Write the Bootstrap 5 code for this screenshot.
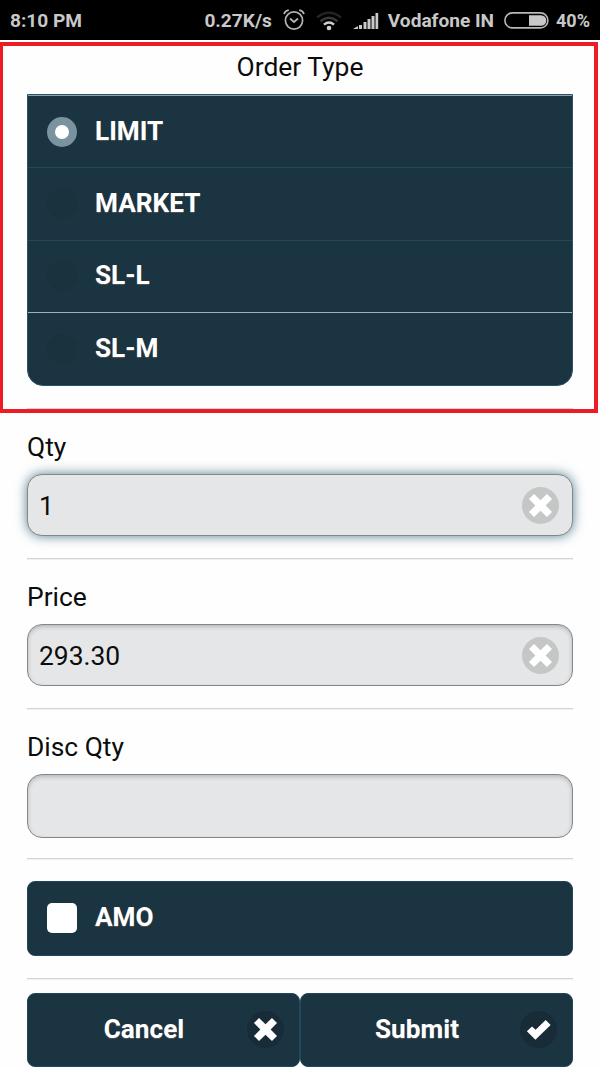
<!DOCTYPE html>
<html lang="en">
<head>
<meta charset="utf-8">
<meta name="viewport" content="width=device-width, initial-scale=1">
<title>Order</title>
<link href="https://cdn.jsdelivr.net/npm/bootstrap@5.3.0/dist/css/bootstrap.min.css" rel="stylesheet">
<style>
body{font-family:Roboto,"Liberation Sans",sans-serif;font-size:26.4px;line-height:30px;color:#0c0c0c;background:#fefefe;overflow:hidden}
.statusbar{height:40px;background:#000;color:#c8c8c8;font-size:19.1px;font-weight:700;line-height:22px;padding:2px 10px 0;white-space:nowrap}
.section{border-bottom:1px solid #d4d4d4;box-shadow:0 1px 0 #f0f0f0}
.types{height:369px}
.field{height:150px}
.highlight{left:0;top:42px;width:598px;height:371px;border:4px solid #ed1c24;border-left-width:3px;z-index:3;pointer-events:none}
.dark-box{background:#1a3441;color:#fff;border:1px solid #23485c;font-weight:700;font-size:26.2px;text-shadow:0 1px 1px #555;border-radius:8px}
.options{margin-top:12px;height:292px;border-radius:0 0 16px 16px;overflow:hidden;box-shadow:inset 0 1px 0 #8fa2ae;border-color:#2d5165;padding-top:1px}
.option{height:72.3px;padding:0 19px;border-bottom:1px solid #23485c}
.option.light-line{border-bottom-color:#9fb0bb}
.option:last-child{border:0}
.dot{width:30px;height:30px;border-radius:50%;background:#1a323e;margin-right:18px}
.dot.on{background:#fff;border:8px solid #7b929f}
.caption{padding-bottom:2px}
.entry{height:62px;border:1.5px solid #858687;border-radius:15px;background:#e5e6e8;color:#0c0c0c;box-shadow:inset 0 2px 4px rgba(0,0,0,.2);padding:1px 13px 0 11px}
.entry.active{box-shadow:0 0 12px rgba(56,105,127,.85)}
.tick{width:30px;height:30px;border-radius:5px;background:#fff;margin-right:18px}
.amo{height:75px;padding:0 0 1px 19px}
.action{height:73.5px;width:273px;padding:0 15px 0 0}
</style>
</head>
<body>
<svg width="0" height="0" class="position-absolute">
  <symbol id="cross" viewBox="0 0 36 36"><path d="M11.7 6.8 18 13 24.3 6.8 29.2 11.7 23 18 29.2 24.3 24.3 29.2 18 23 11.7 29.2 6.8 24.3 13 18 6.8 11.7Z" fill="#fff"/></symbol>
</svg>
<header class="statusbar d-flex align-items-center">
  <span>8:10 PM</span>
  <span class="ms-auto">0.27K/s</span>
  <svg width="22" height="22" viewBox="0 0 22 22" fill="none" stroke="#b4b4b4" stroke-width="1.7" style="margin:0 0 2px 11px"><circle cx="11" cy="11.5" r="8.6"/><path d="M7 9.5 11 13 15 9.5M1 5Q2 1.8 5.8 1.2M21 5Q20 1.8 16.2 1.2"/></svg>
  <svg width="26" height="20" viewBox="0 0 26 20" fill="none" stroke-width="2.4" style="margin-left:11px"><path d="M1 6.5Q13-3 25 6.5" stroke="#242424"/><path d="M4.5 10.2Q13 3.4 21.5 10.2" stroke="#3a3a3a"/><path d="M8 13.7Q13 9.4 18 13.7" stroke="#d0d0d0"/><circle cx="13" cy="17" r="2.3" fill="#d0d0d0"/></svg>
  <svg width="26" height="18" viewBox="0 0 26 18" fill="#c8c8c8" style="margin-left:11px"><path d="M0 17 4 14.5H5V17ZM6 13h3v4H6ZM10.5 10h3v7h-3ZM14.5 7h3v10h-3ZM18.5 4h3v13h-3ZM22.5 1h2.7v16h-2.7Z"/></svg>
  <span style="margin-left:9px">Vodafone IN</span>
  <svg width="45" height="17" viewBox="0 0 45 17" style="margin:0 0 2px 10px"><rect x=".9" y=".9" width="43" height="15" rx="7.5" fill="none" stroke="#b8b8b8" stroke-width="1.6"/><path d="M25 3.2h12a5.3 5.3 0 0 1 0 10.6H25Z" fill="#c8c8c8"/></svg>
  <span style="margin-left:7px;font-size:18px">40%</span>
</header>
<main style="padding:0 27px">
  <section class="section types">
    <div class="text-center" style="padding-top:12px">Order Type</div>
    <div class="options dark-box">
      <div class="option d-flex align-items-center"><span class="dot on"></span><span class="caption">LIMIT</span></div>
      <div class="option d-flex align-items-center"><span class="dot"></span><span class="caption">MARKET</span></div>
      <div class="option light-line d-flex align-items-center"><span class="dot"></span><span class="caption">SL-L</span></div>
      <div class="option d-flex align-items-center"><span class="dot"></span><span class="caption">SL-M</span></div>
    </div>
  </section>
  <section class="section field">
    <div style="padding:23px 0 12px">Qty</div>
    <div class="entry active d-flex align-items-center justify-content-between"><span>1</span><svg width="37" height="37" viewBox="0 0 36 36"><circle cx="18" cy="18" r="18" fill="#c5c6c6"/><use href="#cross"/></svg></div>
  </section>
  <section class="section field">
    <div style="padding:23px 0 12px">Price</div>
    <div class="entry d-flex align-items-center justify-content-between"><span>293.30</span><svg width="37" height="37" viewBox="0 0 36 36"><circle cx="18" cy="18" r="18" fill="#c5c6c6"/><use href="#cross"/></svg></div>
  </section>
  <section class="section field">
    <div style="padding:23px 0 12px">Disc Qty</div>
    <div class="entry" style="height:64px"></div>
  </section>
  <section class="section" style="height:120px;padding-top:22px">
    <div class="dark-box amo d-flex align-items-center"><span class="tick"></span><span class="caption">AMO</span></div>
  </section>
  <section class="d-flex" style="padding-top:14px">
    <div class="action dark-box d-flex align-items-center"><span class="caption flex-grow-1 text-center" style="padding-left:13px">Cancel</span><svg width="37" height="37" viewBox="0 0 36 36"><circle cx="18" cy="18" r="18" fill="#182c38"/><use href="#cross"/></svg></div>
    <div class="action dark-box d-flex align-items-center"><span class="caption flex-grow-1 text-center" style="padding-left:13px">Submit</span><svg width="37" height="37" viewBox="0 0 36 36"><circle cx="18" cy="18" r="18" fill="#182c38"/><path d="M6.7 19.7 11.7 15 15.2 18.3 25 8.7 29.8 13.6 15 28Z" fill="#fff"/></svg></div>
  </section>
</main>
<div class="highlight position-absolute"></div>
<script src="https://cdn.jsdelivr.net/npm/bootstrap@5.3.0/dist/js/bootstrap.bundle.min.js"></script>
</body>
</html>
